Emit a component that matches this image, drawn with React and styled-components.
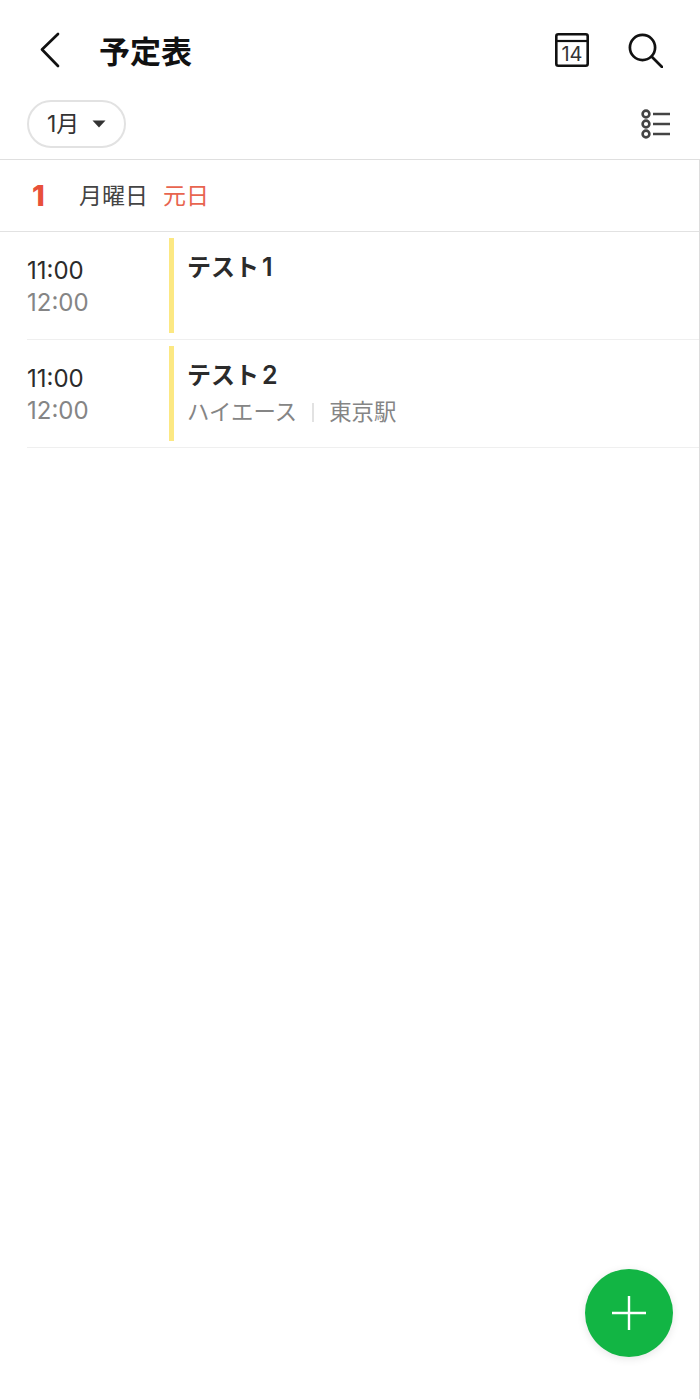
import React from 'react';
import styled, { createGlobalStyle } from 'styled-components';

const GlobalStyle = createGlobalStyle`
  html, body { margin: 0; padding: 0; background: #fff; }
  body { font-family: "Inter", "Noto Sans CJK JP", sans-serif; }
`;

const Page = styled.div`
  position: relative;
  width: 700px;
  height: 1399px;
  overflow: hidden;
  background: #fff;
`;

const Header = styled.header`
  display: flex;
  align-items: center;
  height: 100px;
  padding: 0 37px 0 39px;
  box-sizing: border-box;
`;

const Title = styled.h1`
  margin: 0 0 0 38px;
  flex: 1;
  font: 700 31px/40px "Noto Sans CJK JP", sans-serif;
  color: #111;
`;

const HeaderIcons = styled.div`
  display: flex;
  align-items: center;
  gap: 39px;
`;

const FilterBar = styled.div`
  display: flex;
  align-items: center;
  justify-content: space-between;
  height: 59px;
  padding: 0 29px 11px 27px;
  box-sizing: border-box;
`;

const MonthPill = styled.button`
  display: flex;
  align-items: center;
  gap: 13px;
  width: 99px;
  height: 48px;
  padding: 0 0 0 18px;
  box-sizing: border-box;
  background: #fff;
  border: 2px solid #e2e2e2;
  border-radius: 24px;
  font: 400 23px/1 "Inter", "Noto Sans CJK JP", sans-serif;
  color: #333;
`;

const Body = styled.main`
  border-top: 1px solid #dfdfdf;
  border-right: 1px solid #dcdcdc;
  height: 1240px;
`;

const DayRow = styled.div`
  display: flex;
  align-items: center;
  height: 71px;
  padding-left: 32px;
  border-bottom: 1px solid #e2e2e2;
`;

const DayNumber = styled.span`
  width: 47px;
  font: 800 29px/1 "Inter", sans-serif;
  color: #e8503a;
`;

const DayName = styled.span`
  margin-top: -2px;
  font: 400 23px/1 "Noto Sans CJK JP", sans-serif;
  color: #444;
`;

const Holiday = styled(DayName)`
  margin-left: 15px;
  color: #e8654f;
`;

const EventRow = styled.div`
  display: flex;
  align-items: stretch;
  height: 108px;
  margin-left: 27px;
  padding: 6px 0;
  box-sizing: border-box;
  border-bottom: 1px solid #efefef;
`;

const Times = styled.div`
  width: 142px;
  padding-top: 17px;
  font: 400 24px/32px "Inter", sans-serif;
`;

const TimeText = styled.div`
  color: ${p => (p.$end ? '#858585' : '#2b2b2b')};
`;

const ColorBar = styled.div`
  width: 5px;
  background: #fce883;
`;

const EventText = styled.div`
  margin-left: 13px;
  padding-top: 8px;
`;

const EventTitle = styled.div`
  font: 700 24px/40px "Noto Sans CJK JP", sans-serif;
  color: #2b2b2b;
`;

const EventNumber = styled.span`
  margin-left: 3px;
  font: 600 25px/40px "Inter", sans-serif;
`;

const EventMeta = styled.div`
  display: flex;
  align-items: center;
  margin-top: -1px;
  font: 400 22.4px/32px "Noto Sans CJK JP", sans-serif;
  color: #858585;
`;

const MetaDivider = styled.span`
  width: 2px;
  height: 19px;
  margin: 4px 15px 0 15px;
  background: #e2e2e2;
`;

const Fab = styled.button`
  position: absolute;
  left: 585px;
  top: 1269px;
  display: flex;
  align-items: center;
  justify-content: center;
  width: 88px;
  height: 88px;
  padding: 0;
  border: 0;
  border-radius: 50%;
  background: #12b544;
  box-shadow: 0 2px 8px rgba(0, 0, 0, 0.1);
`;

function BackIcon() {
  return (
    <svg width="22" height="36" viewBox="0 0 22 36" fill="none" stroke="#111" strokeWidth="2.7" strokeLinecap="round" strokeLinejoin="round">
      <path d="M19 2 3 17.5 19 34" />
    </svg>
  );
}

function CalendarIcon() {
  return (
    <svg width="34" height="34" viewBox="0 0 34 34" fill="none">
      <rect x="1.3" y="1.3" width="31.4" height="31.4" rx="2" stroke="#111" strokeWidth="2.6" />
      <path d="M1.2 8h31.6" stroke="#111" strokeWidth="2.2" />
      <text x="17" y="28" textAnchor="middle" fontFamily="Inter, sans-serif" fontSize="20" fill="#333">14</text>
    </svg>
  );
}

function SearchIcon() {
  return (
    <svg width="35" height="35" viewBox="0 0 35 35" fill="none" stroke="#111" strokeWidth="2.7" strokeLinecap="round">
      <circle cx="14.5" cy="14.5" r="12.6" />
      <path d="M23.8 23.8 34 34" />
    </svg>
  );
}

function ListIcon() {
  return (
    <svg width="30" height="30" viewBox="0 0 30 30" fill="none" stroke="#444" strokeWidth="2.6">
      <circle cx="5" cy="5" r="3.4" />
      <circle cx="5" cy="15" r="3.4" />
      <circle cx="5" cy="25" r="3.4" />
      <path d="M12 5h17M12 15h17M12 25h17" />
    </svg>
  );
}

function CaretIcon() {
  return (
    <svg width="14" height="8" viewBox="0 0 14 8" fill="#333">
      <path d="M0.5 0.5h13L7 7.5z" />
    </svg>
  );
}

function PlusIcon() {
  return (
    <svg width="34" height="34" viewBox="0 0 34 34" stroke="#fff" strokeWidth="2.4">
      <path d="M17 0v34M0 17h34" />
    </svg>
  );
}

const events = [
  { id: 1, start: '11:00', end: '12:00', title: 'テスト', num: 1 },
  { id: 2, start: '11:00', end: '12:00', title: 'テスト', num: 2, member: 'ハイエース', place: '東京駅' },
];

export default function App() {
  return (
    <Page>
      <GlobalStyle />
      <Header>
        <BackIcon />
        <Title>予定表</Title>
        <HeaderIcons>
          <CalendarIcon />
          <SearchIcon />
        </HeaderIcons>
      </Header>
      <FilterBar>
        <MonthPill>
          1月
          <CaretIcon />
        </MonthPill>
        <ListIcon />
      </FilterBar>
      <Body>
        <DayRow>
          <DayNumber>1</DayNumber>
          <DayName>月曜日</DayName>
          <Holiday>元日</Holiday>
        </DayRow>
        {events.map(ev => (
          <EventRow key={ev.id}>
            <Times>
              <TimeText>{ev.start}</TimeText>
              <TimeText $end>{ev.end}</TimeText>
            </Times>
            <ColorBar />
            <EventText>
              <EventTitle>
                {ev.title}
                <EventNumber>{ev.num}</EventNumber>
              </EventTitle>
              {ev.member && (
                <EventMeta>
                  {ev.member}
                  <MetaDivider />
                  {ev.place}
                </EventMeta>
              )}
            </EventText>
          </EventRow>
        ))}
      </Body>
      <Fab>
        <PlusIcon />
      </Fab>
    </Page>
  );
}
